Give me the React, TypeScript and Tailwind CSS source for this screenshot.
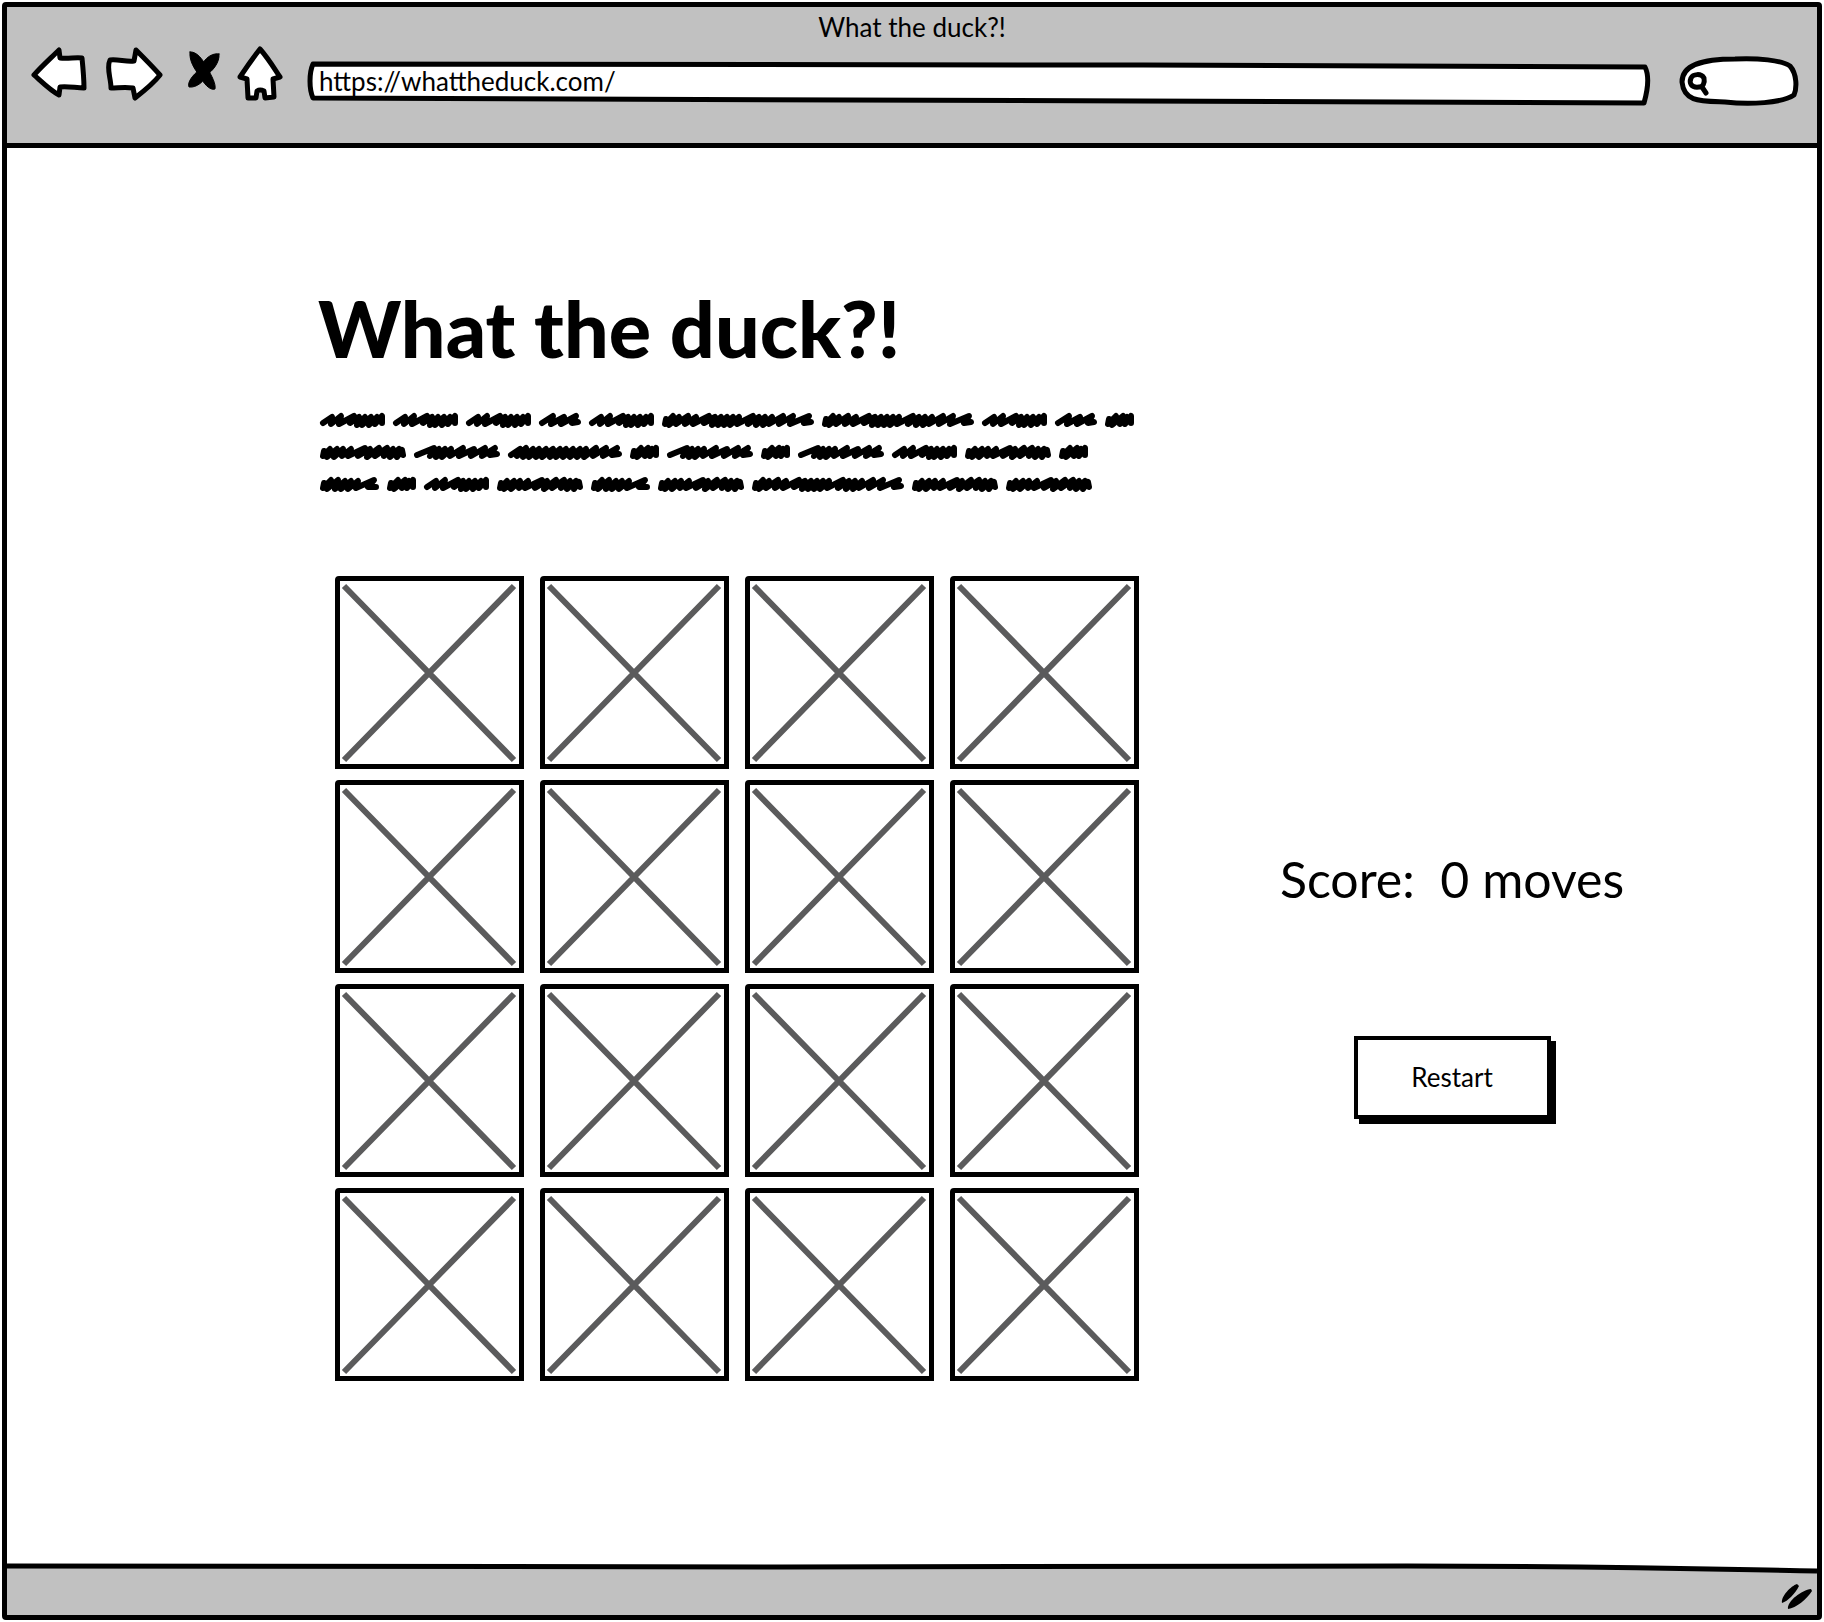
import React, { useState } from "react";

type Mark = { width: number; d: string };

// Scribbled placeholder words, drawn in a 16px high box.
const MARKS: Record<string, Mark> = {
  A: { width: 65, d: "M3 11 12 5 11 12 21 4 19 12 34 4 30 11 39 5 37 13 45 5 42 13 51 5 49 13 57 5 55 12 62 4 62 11" },
  B: { width: 42, d: "M3 11 14 4 12 12 25 5 22 12 37 4 33 11 39 10" },
  C: { width: 152, d: "M4 7 3 12 11 4 7 13 17 5 14 12 26 4 23 12 34 5 31 12 47 4 42 11 53 5 50 13 59 5 56 13 65 5 62 13 71 5 68 13 77 5 75 12 91 4 86 12 97 5 94 13 103 5 101 13 110 5 107 12 121 4 117 12 131 4 128 12 147 4 142 11 149 10" },
  D: { width: 86, d: "M4 7 3 12 10 5 7 13 17 5 14 13 23 5 22 12 31 5 28 12 45 4 38 12 50 5 47 13 59 4 55 12 67 4 64 12 73 5 70 13 79 5 77 13 82 6 83 11" },
  E: { width: 86, d: "M3 11 20 4 16 12 25 5 22 13 31 5 28 13 37 5 36 12 49 4 45 12 60 5 57 12 71 4 68 12 81 4 76 11 83 10" },
  F: { width: 114, d: "M3 11 12 5 9 12 18 4 15 13 25 5 21 13 31 5 28 13 38 5 34 13 45 5 42 13 52 5 48 13 58 5 55 13 65 5 62 13 72 5 69 13 78 5 76 13 88 4 85 12 98 4 95 12 109 4 104 11 111 10" },
  G: { width: 29, d: "M4 7 3 12 11 4 7 13 18 4 15 12 22 5 20 12 26 4 26 11" },
  H: { width: 59, d: "M4 7 3 12 11 4 7 13 18 4 15 13 25 5 21 13 31 5 28 13 38 5 36 12 54 4 48 11 56 11" },
};

const LINES = ["AAABACCABG", "DEFGEGEADG", "HGADHDCDD"];

function Scribble({ mark }: { mark: Mark }) {
  return (
    <svg width={mark.width} height="16" viewBox={`0 0 ${mark.width} 16`} className="shrink-0 overflow-visible" fill="none" stroke="black" strokeWidth="6" strokeLinecap="round" strokeLinejoin="round" aria-hidden="true">
      <path d={mark.d} />
    </svg>
  );
}

const ICON = {
  fill: "white",
  stroke: "black",
  strokeWidth: 5,
  strokeLinejoin: "round" as const,
  strokeLinecap: "round" as const,
};

function BrowserBar() {
  return (
    <header className="border-b-[5px] border-black bg-[#c1c1c1] pb-9">
      <p className="pt-0.5 text-center text-[26px] leading-9">What the duck?!</p>
      <div className="flex items-start gap-4 pr-[18px] pl-6">
        <button type="button" aria-label="Back">
          <svg width="58" height="58" viewBox="31 45 58 58" {...ICON}>
            <path d="M34 75C42 66 51 58 59 50L60 58C68 59 76 57 82 58C83 68 84 78 84 88C76 88 68 86 60 87L59 95C51 91 43 83 34 75Z" />
          </svg>
        </button>
        <button type="button" aria-label="Forward">
          <svg width="60" height="58" viewBox="105 45 60 58" {...ICON}>
            <path d="M110 60C118 59 126 62 134 61L136 50C144 58 152 66 160 75C153 84 144 91 135 98L133 88C125 87 118 88 111 88C111 78 106 68 110 60Z" />
          </svg>
        </button>
        <button type="button" aria-label="Stop">
          <svg width="40" height="58" viewBox="181 45 40 58" {...ICON} fill="black" strokeWidth={1}>
            <path d="M190 52C196 51 203 59 207 68C212 76 216 84 215 89C210 91 203 83 200 76C194 69 189 60 190 52Z" />
            <path d="M219 54C220 63 212 71 207 75C204 81 197 88 189 87C187 82 193 75 199 70C202 62 210 52 219 54Z" />
          </svg>
        </button>
        <button type="button" aria-label="Home">
          <svg width="46" height="58" viewBox="237 45 46 58" {...ICON}>
            <path d="M260 49C268 58 274 68 280 77L273 79L274 97L265 98L264 91Q260 89 257 91L256 98L248 98L247 79L240 77C246 68 253 58 260 49Z" />
          </svg>
        </button>
        <div className="relative mt-[14px] ml-2 flex h-12 min-w-0 flex-1 items-center">
          <svg className="absolute inset-0 h-full w-full" viewBox="0 0 1344 48" preserveAspectRatio="none" {...ICON} aria-hidden="true">
            <path vectorEffect="non-scaling-stroke" d="M6 5C400 3 900 7 1338 8C1342 16 1341 30 1337 44C900 43 400 39 6 39C2 30 2 14 6 5Z" />
          </svg>
          <input type="text" aria-label="Address" defaultValue="https://whattheduck.com/" className="relative mb-1 w-full bg-transparent px-3 text-[26px] leading-9 outline-none" />
        </div>
        <div className="relative mt-[10px] ml-3 flex h-[52px] w-[120px] shrink-0 items-center">
          <svg className="absolute inset-0" width="120" height="52" viewBox="1679 56 120 52" {...ICON} aria-hidden="true">
            <path d="M1682 83C1682 66 1702 60 1735 60C1758 59 1781 61 1790 67C1797 75 1797 89 1794 96C1782 104 1750 106 1725 103C1700 102 1684 103 1682 83Z" />
            <path fill="none" d="M1691 79C1693 75 1701 74 1704 79C1705 84 1703 88 1699 88C1691 89 1689 84 1691 79ZM1702 88L1706 94" />
          </svg>
          <input type="text" aria-label="Search" className="relative ml-8 w-[72px] bg-transparent text-xl outline-none" />
        </div>
      </div>
    </header>
  );
}

function Card({ index }: { index: number }) {
  return (
    <button type="button" aria-label={`Card ${index}`} className="h-[193px] rounded-tl-sm border-[5px] border-black bg-white">
      <svg className="h-full w-full" viewBox="0 0 179 183" preserveAspectRatio="none" stroke="#5b5b5c" strokeWidth="6" aria-hidden="true">
        <path d="M4 5 174 179M174 5 4 179" />
      </svg>
    </button>
  );
}

export default function App() {
  const [moves, setMoves] = useState(0);
  return (
    <div className="flex min-h-screen flex-col bg-white p-[2px] font-['Lato',sans-serif] text-black">
      <div className="flex flex-1 flex-col rounded-sm border-[5px] border-black">
        <BrowserBar />
        <main className="flex-1 pr-[52px] pl-[311px]">
          <h1 className="pt-[132px] text-[79px] leading-[96px] font-black">What the duck?!</h1>
          <div className="mt-9 flex flex-col gap-4 pl-[2px]">
            {LINES.map((line, i) => (
              <div key={i} className="flex gap-2">
                {line.split("").map((k, j) => (
                  <Scribble key={j} mark={MARKS[k]} />
                ))}
              </div>
            ))}
          </div>
          <div className="mt-[84px] flex items-center pl-[17px]">
            <div className="grid shrink-0 grid-cols-[repeat(4,189px)] gap-x-4 gap-y-[11px]">
              {Array.from({ length: 16 }, (_, i) => (
                <Card key={i} index={i + 1} />
              ))}
            </div>
            <aside className="flex flex-1 flex-col items-center">
              <p className="text-[50px] leading-[80px] whitespace-pre">Score:  {moves} moves</p>
              <button
                type="button"
                onClick={() => setMoves(0)}
                className="mt-[117px] h-[83px] w-[197px] border-4 border-black bg-white text-[26px] shadow-[5px_5px_0_0_black]"
              >
                Restart
              </button>
            </aside>
          </div>
        </main>
        <footer className="relative h-[52px] bg-[#c1c1c1]">
          <svg className="absolute inset-x-0 top-0 h-3 w-full" viewBox="0 0 1810 12" preserveAspectRatio="none" aria-hidden="true">
            <path fill="white" d="M0 0V3C600 5 1400 -1 1810 8V0Z" />
            <path fill="none" stroke="black" strokeWidth="5" vectorEffect="non-scaling-stroke" d="M0 3C300 6 1000 3 1400 3C1600 3 1700 6 1810 8" />
          </svg>
          <svg className="absolute right-1 bottom-1 h-7 w-8" viewBox="1781 1583 32 28" aria-hidden="true">
            <path d="M1782 1603C1781 1596 1791 1586 1797 1584L1799 1586C1795 1594 1788 1601 1782 1603ZM1788 1609C1787 1601 1802 1590 1811 1589L1812 1591C1807 1599 1796 1608 1788 1609Z" />
          </svg>
        </footer>
      </div>
    </div>
  );
}
